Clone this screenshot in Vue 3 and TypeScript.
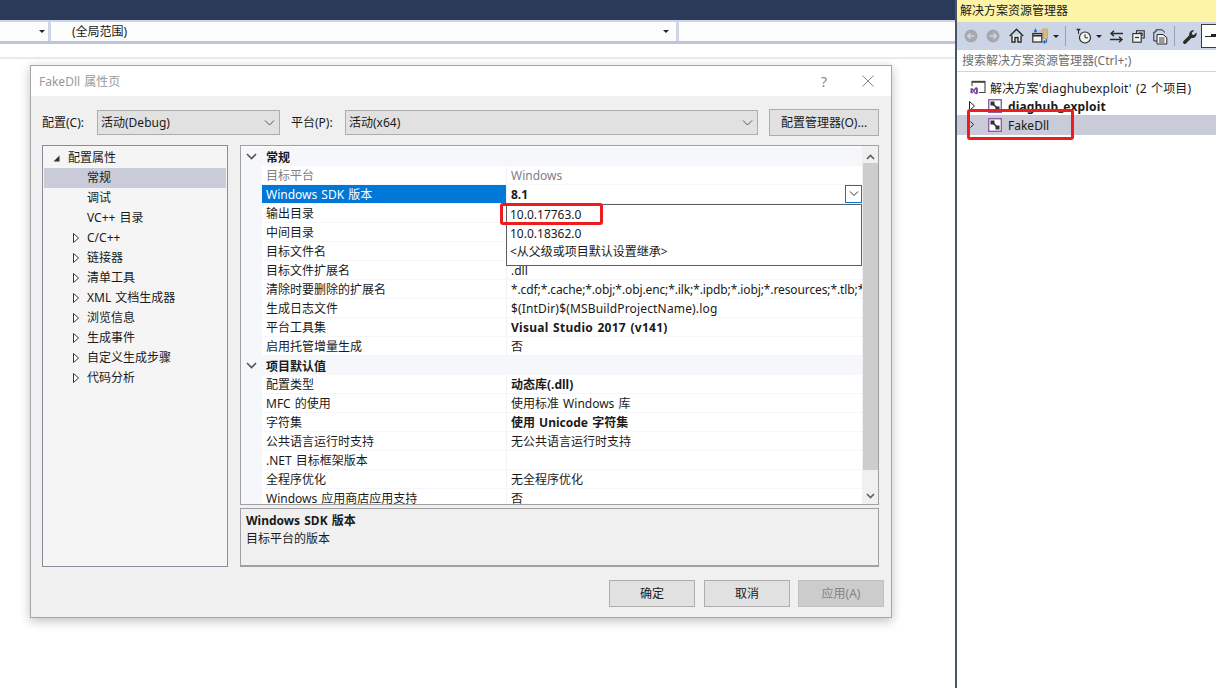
<script setup lang="ts">
interface TreeItem {
  label: string
  indent: 'root' | 'leaf' | 'branch'
  selected?: boolean
}

interface PropRow {
  name: string
  value?: string
  bold?: boolean
  header?: boolean
  muted?: boolean
  active?: boolean
  fit?: 'tight' | 'wide' | 'wider'
}

const treeItems: TreeItem[] = [
  { label: '配置属性', indent: 'root' },
  { label: '常规', indent: 'leaf', selected: true },
  { label: '调试', indent: 'leaf' },
  { label: 'VC++ 目录', indent: 'leaf' },
  { label: 'C/C++', indent: 'branch' },
  { label: '链接器', indent: 'branch' },
  { label: '清单工具', indent: 'branch' },
  { label: 'XML 文档生成器', indent: 'branch' },
  { label: '浏览信息', indent: 'branch' },
  { label: '生成事件', indent: 'branch' },
  { label: '自定义生成步骤', indent: 'branch' },
  { label: '代码分析', indent: 'branch' },
]

const propRows: PropRow[] = [
  { name: '常规', header: true },
  { name: '目标平台', value: 'Windows', muted: true },
  { name: 'Windows SDK 版本', value: '8.1', bold: true, active: true },
  { name: '输出目录', value: '' },
  { name: '中间目录', value: '' },
  { name: '目标文件名', value: '' },
  { name: '目标文件扩展名', value: '.dll' },
  { name: '清除时要删除的扩展名', value: '*.cdf;*.cache;*.obj;*.obj.enc;*.ilk;*.ipdb;*.iobj;*.resources;*.tlb;*.tli;*.tlh', fit: 'tight' },
  { name: '生成日志文件', value: '$(IntDir)$(MSBuildProjectName).log', fit: 'wide' },
  { name: '平台工具集', value: 'Visual Studio 2017 (v141)', bold: true, fit: 'wider' },
  { name: '启用托管增量生成', value: '否' },
  { name: '项目默认值', header: true },
  { name: '配置类型', value: '动态库(.dll)', bold: true },
  { name: 'MFC 的使用', value: '使用标准 Windows 库' },
  { name: '字符集', value: '使用 Unicode 字符集', bold: true },
  { name: '公共语言运行时支持', value: '无公共语言运行时支持' },
  { name: '.NET 目标框架版本', value: '' },
  { name: '全程序优化', value: '无全程序优化' },
  { name: 'Windows 应用商店应用支持', value: '否' },
]

const sdkOptions = ['10.0.17763.0', '10.0.18362.0', '<从父级或项目默认设置继承>']
</script>

<template>
  <div class="screen">
    <div class="workspace">
      <div class="titlebar"></div>
      <div class="scope-bar">
        <div class="scope scope-a"><span class="caret"></span></div>
        <div class="scope scope-b">
          <span>(全局范围)</span>
          <span class="caret"></span>
        </div>
        <div class="scope scope-c"></div>
      </div>
      <div class="tab-strip"></div>

      <div class="dialog">
        <div class="dialog-title">
          <span class="dialog-name">FakeDll 属性页</span>
          <span class="help">?</span>
          <svg class="close" width="12" height="12" viewBox="0 0 12 12">
            <path d="M0.5 0.5 L11.5 11.5 M11.5 0.5 L0.5 11.5" stroke="#8a8a8a" stroke-width="1" fill="none" />
          </svg>
        </div>

        <div class="dialog-body">
          <div class="config-row">
            <span class="config-label">配置(C):</span>
            <div class="select select-config">
              <span>活动(Debug)</span>
              <svg width="11" height="6" viewBox="0 0 11 6"><path d="M1 0.5 L5.5 5 L10 0.5" stroke="#555" fill="none" /></svg>
            </div>
            <span class="config-label platform-label">平台(P):</span>
            <div class="select select-platform">
              <span>活动(x64)</span>
              <svg width="11" height="6" viewBox="0 0 11 6"><path d="M1 0.5 L5.5 5 L10 0.5" stroke="#555" fill="none" /></svg>
            </div>
            <div class="btn manager">配置管理器(O)...</div>
          </div>

          <div class="main-row">
            <div class="tree">
              <div
                v-for="item in treeItems"
                :key="item.label"
                class="tree-item"
                :class="[`tree-${item.indent}`, { selected: item.selected }]"
              >
                <svg v-if="item.indent === 'root'" class="twisty" width="7" height="7" viewBox="0 0 7 7">
                  <path d="M6.5 0.5 V6.5 H0.5 Z" fill="#333" />
                </svg>
                <svg v-if="item.indent === 'branch'" class="twisty" width="6" height="10" viewBox="0 0 6 10">
                  <path d="M0.5 0.5 L5.5 5 L0.5 9.5 Z" fill="#fff" stroke="#333" />
                </svg>
                <span>{{ item.label }}</span>
              </div>
            </div>

            <div class="right-col">
              <div class="grid-box">
                <div class="grid-list">
                  <div
                    v-for="row in propRows"
                    :key="row.name"
                    class="prop-row"
                    :class="{ 'is-header': row.header, 'is-muted': row.muted, 'is-active': row.active }"
                  >
                    <div class="gutter">
                      <svg v-if="row.header" width="11" height="7" viewBox="0 0 11 7">
                        <path d="M1 1 L5.5 5.5 L10 1" stroke="#555" stroke-width="1.6" fill="none" />
                      </svg>
                    </div>
                    <div class="prop-name">{{ row.name }}</div>
                    <div
                      v-if="!row.header"
                      class="prop-value"
                      :class="[{ strong: row.bold }, row.fit ? `fit-${row.fit}` : '']"
                    >{{ row.value }}</div>
                    <div v-if="row.active" class="drop-btn">
                      <svg width="10" height="6" viewBox="0 0 10 6"><path d="M1 0.5 L5 4.5 L9 0.5" stroke="#333" fill="none" /></svg>
                    </div>
                  </div>
                </div>
                <div class="scrollbar">
                  <svg width="9" height="6" viewBox="0 0 9 6"><path d="M1 5 L4.5 1.5 L8 5" stroke="#606060" stroke-width="1.6" fill="none" /></svg>
                  <div class="thumb"></div>
                  <svg width="9" height="6" viewBox="0 0 9 6"><path d="M1 1 L4.5 4.5 L8 1" stroke="#606060" stroke-width="1.6" fill="none" /></svg>
                </div>
                <div class="dropdown">
                  <div v-for="opt in sdkOptions" :key="opt" class="dropdown-item">{{ opt }}</div>
                </div>
              </div>
              <div class="desc-box">
                <div class="desc-title">Windows SDK 版本</div>
                <div>目标平台的版本</div>
              </div>
            </div>
          </div>

          <div class="footer">
            <div class="btn foot-btn">确定</div>
            <div class="btn foot-btn">取消</div>
            <div class="btn foot-btn disabled">应用(A)</div>
          </div>
        </div>
      </div>
    </div>

    <aside class="explorer">
      <div class="explorer-title">解决方案资源管理器</div>
      <div class="explorer-tools">
        <svg width="14" height="14" viewBox="0 0 14 14" class="t-back">
          <circle cx="7" cy="7" r="6.5" fill="#a5a8ae" />
          <path d="M10.5 7 H4 M6.5 4.2 L3.8 7 L6.5 9.8" stroke="#ccd5e5" stroke-width="1.6" fill="none" />
        </svg>
        <svg width="14" height="14" viewBox="0 0 14 14" class="t-fwd">
          <circle cx="7" cy="7" r="6.5" fill="#a5a8ae" />
          <path d="M3.5 7 H10 M7.5 4.2 L10.2 7 L7.5 9.8" stroke="#ccd5e5" stroke-width="1.6" fill="none" />
        </svg>
        <svg width="15" height="15" viewBox="0 0 15 15" class="t-home">
          <path d="M0.8 8 L7.5 1.2 L14.2 8" stroke="#2b2b2b" stroke-width="1.5" fill="none" />
          <path d="M3 7.5 V14 H6 V9.5 H9 V14 H12 V7.5" stroke="#2b2b2b" stroke-width="1.4" fill="#f5f5f5" />
        </svg>
        <svg width="16" height="16" viewBox="0 0 16 16" class="t-sync">
          <path d="M7 3 H10 L11 1 H15.5 V10.5 H11 V3" fill="#dcb67a" stroke="#c9a263" stroke-width="0.8" />
          <rect x="0.8" y="5.5" width="9" height="8.5" fill="#f5f5f5" stroke="#2b2b2b" stroke-width="1.2" />
          <path d="M1 7.6 H9.6" stroke="#2b2b2b" stroke-width="1.8" />
          <path d="M3.5 0.5 V4 M2 2.5 L3.5 4 L5 2.5" stroke="#1e6fc0" stroke-width="1.2" fill="none" />
          <path d="M14.5 11 V14 H11.5 M13 12.5 L11.5 14 L13 15.5" stroke="#1e6fc0" stroke-width="1.2" fill="none" />
        </svg>
        <span class="mini-caret caret-sync"></span>
        <i class="sep"></i>
        <svg width="17" height="16" viewBox="0 0 17 16" class="t-clock">
          <path d="M1 0.8 H6 L3.5 3.6 Z" fill="#2b2b2b" />
          <path d="M3.5 3 V6" stroke="#2b2b2b" />
          <circle cx="10" cy="9.5" r="5.5" fill="#f2f2f2" stroke="#2b2b2b" stroke-width="1.2" />
          <path d="M10 6.2 V9.8 H13" stroke="#2b2b2b" fill="none" />
        </svg>
        <span class="mini-caret caret-clock"></span>
        <svg width="15" height="13" viewBox="0 0 15 13" class="t-swap">
          <path d="M14 3.5 H2 M5 0.8 L2 3.5 L5 6.2" stroke="#2b2b2b" stroke-width="1.4" fill="none" />
          <path d="M1 9.5 H13 M10 6.8 L13 9.5 L10 12.2" stroke="#2b2b2b" stroke-width="1.4" fill="none" />
        </svg>
        <svg width="13" height="13" viewBox="0 0 13 13" class="t-collapse">
          <path d="M4.5 3 V0.8 H12.2 V8 H9.5" fill="none" stroke="#2b2b2b" stroke-width="1.1" />
          <path d="M6.5 3 H10.2 V6" fill="none" stroke="#2b2b2b" stroke-width="1" />
          <rect x="0.8" y="3.6" width="8.4" height="8.6" fill="#f2f2f2" stroke="#2b2b2b" stroke-width="1.1" />
          <path d="M3 7.5 H7" stroke="#2b2b2b" stroke-width="1.2" />
        </svg>
        <svg width="15" height="16" viewBox="0 0 15 16" class="t-pages">
          <path d="M3 3 V0.8 H9 L12 3.5" fill="none" stroke="#2b2b2b" />
          <path d="M3 3 H0.8 V12 H4" fill="none" stroke="#2b2b2b" />
          <path d="M4 5.5 H10 L13.8 8.5 V15 H4 Z" fill="#f2f2f2" stroke="#2b2b2b" />
          <path d="M6 9 H11.5 M6 11 H11.5 M6 13 H11.5" stroke="#2b2b2b" stroke-width="0.9" />
        </svg>
        <i class="sep sep-b"></i>
        <svg width="14" height="14" viewBox="0 0 14 14" class="t-wrench">
          <path d="M1.8 12.2 L8 6" stroke="#2b2b2b" stroke-width="3.4" stroke-linecap="round" />
          <path d="M13.6 2.6 L10.8 5 L9 4.6 L8.8 2.8 L11.2 0.4 C8.8 -0.2 6.2 1.6 6.2 4.4 C6.2 7 8.8 8.6 11 7.8 C13 7 14 5 13.6 2.6 Z" fill="#2b2b2b" />
        </svg>
        <div class="pin"><i></i></div>
      </div>
      <div class="explorer-search">搜索解决方案资源管理器(Ctrl+;)</div>
      <div class="sol-tree">
        <div class="sol-row sol-root">
          <svg width="16" height="16" viewBox="0 0 16 16" class="sol-icon">
            <path d="M2 6 V1.5 H15 V12.5 H9" fill="none" stroke="#444" stroke-width="1.1" />
            <path d="M2 1.8 H15" stroke="#444" stroke-width="2" />
            <path d="M0.5 8.5 L2 8 L3.6 9.6 L6 7 L7.8 8 V13.5 L6 14.5 L3.6 12 L2 13.5 L0.5 13 Z" fill="#7b3fa0" />
            <path d="M2 10 L3 11 L2 12 Z M6 9.2 V12.8 L4.4 11 Z" fill="#fff" />
          </svg>
          <span class="fit-wide">解决方案'diaghubexploit' (2 个项目)</span>
        </div>
        <div class="sol-row sol-child">
          <svg class="sol-twisty" width="6" height="10" viewBox="0 0 6 10">
            <path d="M0.5 0.5 L5.5 5 L0.5 9.5 Z" fill="#fff" stroke="#222" />
          </svg>
          <svg width="14" height="14" viewBox="0 0 14 14" class="prj-icon">
            <rect x="0.7" y="0.7" width="12.6" height="12.6" fill="#fff" stroke="#8e5fa8" stroke-width="1.4" />
            <path d="M2.5 2.5 H6.5 V6.5 H2.5 Z M7.5 7.5 H11.5 V11.5 H7.5 Z" fill="#333" />
            <path d="M5 5 L9 9" stroke="#333" stroke-width="1.6" />
          </svg>
          <span class="prj-name strong fit-wide">diaghub_exploit</span>
        </div>
        <div class="sol-row sol-selected">
          <svg class="sol-twisty sol-twisty-small" width="4" height="7" viewBox="0 0 4 7">
            <path d="M0.5 0.5 L3.5 3.5 L0.5 6.5" fill="none" stroke="#222" />
          </svg>
          <svg width="14" height="14" viewBox="0 0 14 14" class="prj-icon">
            <rect x="0.7" y="0.7" width="12.6" height="12.6" fill="#fff" stroke="#8e5fa8" stroke-width="1.4" />
            <path d="M2.5 2.5 H6.5 V6.5 H2.5 Z M7.5 7.5 H11.5 V11.5 H7.5 Z" fill="#333" />
            <path d="M5 5 L9 9" stroke="#333" stroke-width="1.6" />
          </svg>
          <span class="prj-name">FakeDll</span>
        </div>
      </div>
    </aside>

    <div class="mark mark-sdk"></div>
    <div class="mark mark-project"></div>
  </div>
</template>

<style>
html,
body {
  margin: 0;
  background: #fff;
}
</style>

<style scoped>
.screen {
  position: relative;
  display: flex;
  width: 1216px;
  height: 688px;
  overflow: hidden;
  background: #fff;
  color: #1a1a1a;
  font-family: 'Noto Sans', 'Noto Sans CJK SC', sans-serif;
  font-size: 12px;
  line-height: 19px;
  word-spacing: 1px;
}

.workspace {
  width: 955px;
  flex: none;
}

.titlebar {
  height: 20px;
  background: #2b3a58;
}

.scope-bar {
  display: flex;
  height: 19px;
  gap: 3px;
  padding-top: 2px;
  background: #ccd5e5;
  border-bottom: 3px solid #bcc5d8;
  box-sizing: content-box;
}

.scope {
  display: flex;
  align-items: center;
  justify-content: space-between;
  background: #fcfcfc;
}

.scope-a {
  width: 47px;
  justify-content: flex-end;
  padding-right: 1px;
}

.scope-b {
  width: 599px;
  padding: 0 5px 0 21px;
}

.scope-c {
  flex: 1;
}

.caret {
  width: 0;
  height: 0;
  margin-right: 2px;
  border-left: 3px solid transparent;
  border-right: 3px solid transparent;
  border-top: 3px solid #222;
}

.tab-strip {
  height: 13px;
  border-bottom: 2px solid #e9e9f1;
}

.dialog {
  width: 860px;
  height: 551px;
  margin: 6px 0 0 30px;
  display: flex;
  flex-direction: column;
  border: 1px solid #a6a6a6;
  background: #f0f0f0;
  box-shadow: 0 3px 10px rgba(0, 0, 0, 0.25);
}

.dialog-title {
  display: flex;
  align-items: center;
  height: 30px;
  flex: none;
  padding: 0 17px 0 8px;
  background: #fff;
  color: #9a9a9a;
}

.dialog-name {
  flex: 1;
}

.help {
  margin-right: 35px;
  font-size: 14px;
  color: #8a8a8a;
}

.dialog-body {
  flex: 1;
  display: flex;
  flex-direction: column;
  padding: 13px 11px 0 11px;
  min-height: 0;
}

.config-row {
  display: flex;
  align-items: center;
  height: 27px;
}

.config-label {
  width: 55px;
  flex: none;
}

.platform-label {
  width: 54px;
  margin-left: 11px;
}

.select {
  display: flex;
  align-items: center;
  justify-content: space-between;
  height: 25px;
  box-sizing: border-box;
  padding: 0 4px 0 3px;
  background: #e1e1e1;
  border: 1px solid #adadad;
}

.select-config {
  width: 183px;
}

.select-platform {
  width: 413px;
}

.btn {
  display: flex;
  align-items: center;
  justify-content: center;
  box-sizing: border-box;
  background: #e1e1e1;
  border: 1px solid #adadad;
}

.manager {
  width: 110px;
  height: 27px;
  margin-left: 11px;
}

.main-row {
  display: flex;
  gap: 12px;
  margin-top: 9px;
  height: 422px;
}

.tree {
  width: 186px;
  box-sizing: border-box;
  padding: 2px 1px 1px;
  background: #f5f5f5;
  border: 1px solid #8b8c99;
}

.tree-item {
  position: relative;
  height: 20px;
  line-height: 20px;
}

.tree-root {
  padding-left: 24px;
}

.tree-leaf,
.tree-branch {
  padding-left: 43px;
}

.tree-item.selected {
  background: #c9cbd9;
}

.twisty {
  position: absolute;
  top: 7px;
}

.tree-root .twisty {
  left: 9px;
}

.tree-branch .twisty {
  left: 29px;
  top: 5px;
}

.right-col {
  width: 639px;
  display: flex;
  flex-direction: column;
  gap: 3px;
}

.grid-box {
  position: relative;
  display: flex;
  height: 360px;
  box-sizing: border-box;
  border: 1px solid #a0a0a0;
  background: #fff;
  overflow: hidden;
}

.grid-list {
  flex: 1;
  min-width: 0;
  overflow: hidden;
  padding-top: 1px;
}

.prop-row {
  display: flex;
  position: relative;
  height: 19px;
  line-height: 20px;
  box-sizing: border-box;
  border-bottom: 1px solid #f4f6fb;
}

.gutter {
  width: 21px;
  flex: none;
  display: flex;
  align-items: center;
  justify-content: center;
  background: #f5f7fb;
}

.prop-name {
  width: 245px;
  flex: none;
  box-sizing: border-box;
  padding-left: 4px;
  border-right: 1px solid #f0f2f8;
  white-space: nowrap;
}

.prop-value {
  flex: 1;
  min-width: 0;
  padding-left: 4px;
  white-space: nowrap;
  overflow: hidden;
}

.strong {
  font-weight: 700;
}

.fit-tight {
  letter-spacing: -0.11px;
}

.fit-wide {
  letter-spacing: 0.16px;
}

.fit-wider {
  letter-spacing: 0.28px;
}

.is-header {
  background: #f5f7fb;
  border-bottom-color: #f5f7fb;
  line-height: 21px;
}

.is-header .prop-name {
  border-right: 0;
  font-weight: 700;
}

.is-muted .prop-name,
.is-muted .prop-value {
  color: #808080;
}

.is-active .prop-name {
  background: #0078d7;
  color: #fff;
}

.drop-btn {
  display: flex;
  align-items: center;
  justify-content: center;
  flex: none;
  box-sizing: border-box;
  width: 17px;
  height: 18px;
  background: #fff;
  border: 1px solid #0078d7;
}

.scrollbar {
  width: 16px;
  flex: none;
  display: flex;
  flex-direction: column;
  align-items: center;
  padding-top: 8px;
  padding-bottom: 5px;
  box-sizing: border-box;
  background: #f0f0f0;
}

.thumb {
  width: 15px;
  height: 307px;
  flex: none;
  margin: 3px 0 auto;
  background: #cdcdcd;
}

.dropdown {
  position: absolute;
  left: 265px;
  top: 58px;
  width: 356px;
  height: 62px;
  box-sizing: border-box;
  border: 1px solid #5e5e5e;
  background: #fff;
}

.dropdown-item {
  height: 19px;
  line-height: 19px;
  padding-left: 3px;
}

.dropdown-item:last-child {
  margin-top: -1px;
}

.desc-box {
  height: 59px;
  box-sizing: border-box;
  padding: 3px 5px;
  background: #f0f0f0;
  border: 1px solid #a0a0a0;
  border-bottom-width: 2px;
  line-height: 18px;
}

.desc-title {
  font-weight: 700;
}

.footer {
  display: flex;
  justify-content: flex-end;
  gap: 9px;
  margin-top: 13px;
  margin-right: -4px;
}

.foot-btn {
  width: 86px;
  height: 27px;
}

.foot-btn.disabled {
  margin-left: -1px;
  background: #ccc;
  border-color: #bfbfbf;
  color: #838383;
}

.explorer {
  flex: 1;
  border-left: 2px solid #4a5368;
  display: flex;
  flex-direction: column;
}

.explorer-title {
  height: 22px;
  line-height: 21px;
  padding-left: 3px;
  background: #fdf4a8;
}

.explorer-tools {
  position: relative;
  height: 28px;
  background: #ccd5e5;
}

.explorer-tools > svg,
.explorer-tools > .sep,
.explorer-tools > .mini-caret {
  position: absolute;
}

.t-back { left: 7px; top: 7px; }
.t-fwd { left: 29px; top: 7px; }
.t-home { left: 52px; top: 6px; }
.t-sync { left: 75px; top: 6px; }
.t-clock { left: 118px; top: 6px; }
.t-swap { left: 152px; top: 8px; }
.t-collapse { left: 175px; top: 8px; }
.t-pages { left: 196px; top: 7px; }
.t-wrench { left: 226px; top: 8px; }

.mini-caret {
  width: 0;
  height: 0;
  border-left: 3px solid transparent;
  border-right: 3px solid transparent;
  border-top: 3px solid #222;
  top: 13px;
}

.caret-sync { left: 96px; }
.caret-clock { left: 139px; }

.sep {
  width: 1px;
  height: 20px;
  top: 4px;
  left: 108px;
  background: #9aa2b2;
}

.sep-b {
  left: 217px;
}

.pin {
  position: absolute;
  left: 244px;
  top: 2px;
  width: 15px;
  height: 24px;
  box-sizing: border-box;
  background: #fff;
  border: 1px solid #3a3a3a;
  border-right: 0;
}

.pin i {
  position: absolute;
  left: 3px;
  right: 0;
  top: 11px;
  height: 1px;
  background: #222;
}

.pin i::after {
  content: '';
  position: absolute;
  left: 6px;
  right: 0;
  top: -2px;
  height: 3px;
  background: #222;
}

.explorer-search {
  height: 22px;
  line-height: 21px;
  padding-left: 5px;
  color: #6d6d6d;
  background: #fff;
  border-bottom: 1px solid #ccd5e5;
  box-sizing: border-box;
}

.sol-tree {
  padding-top: 7px;
}

.sol-row {
  position: relative;
  display: flex;
  align-items: center;
  height: 18px;
}

.sol-root {
  padding-left: 13px;
}

.sol-icon {
  margin-right: 4px;
}

.sol-twisty {
  position: absolute;
  left: 12px;
  top: 4px;
}

.sol-twisty-small {
  left: 13px;
  top: 6px;
}

.prj-icon {
  margin-left: 31px;
  margin-right: 6px;
}

.sol-selected {
  height: 20px;
  background: #c9cbd9;
}

.mark {
  position: absolute;
  box-sizing: border-box;
  border: 3px solid #ee1c1c;
  border-radius: 3px;
}

.mark-sdk {
  left: 500px;
  top: 203px;
  width: 103px;
  height: 22px;
}

.mark-project {
  left: 967px;
  top: 109px;
  width: 107px;
  height: 31px;
}
</style>
